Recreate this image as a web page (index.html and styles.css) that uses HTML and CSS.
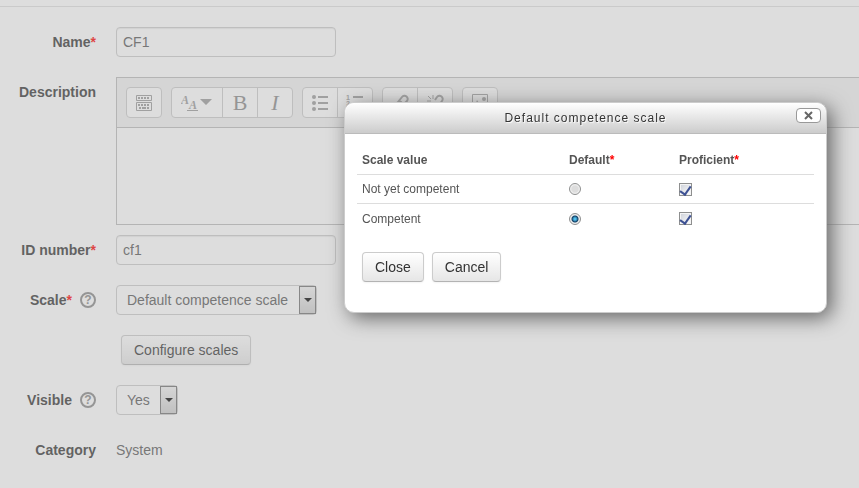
FILE: index.html
```html
<!DOCTYPE html>
<html lang="en">
<head>
    <meta charset="utf-8">
    <title>Competency framework</title>
    <link rel="stylesheet" href="styles.css">
</head>
<body>
    <form class="framework-form">
        <div class="form-row">
            <label class="form-label" for="name">Name<span class="req">*</span></label>
            <input class="text-input" type="text" id="name" value="CF1">
        </div>

        <div class="form-row editor-row">
            <label class="form-label" for="description">Description</label>
            <div class="editor">
                <div class="toolbar">
                    <div class="group">
                        <button type="button" aria-label="Show more buttons">
                            <svg width="16" height="16" viewBox="0 0 16 16" fill="none" stroke="#999">
                                <path d="M.5 .5h15v5h-15zM.5 7.5h15v8h-15z"/>
                                <path d="M2 3h12M2 10h12" stroke-width="2" stroke-dasharray="2 1"/>
                                <path d="M3 13h2M6 13h4M11 13h2" stroke-width="2"/>
                            </svg>
                        </button>
                    </div>
                    <div class="group">
                        <button type="button" class="wide" aria-label="Paragraph styles">
                            <svg width="32" height="20" viewBox="0 0 32 20" fill="#999">
                                <text class="serif-a" x="0" y="11">A</text>
                                <text class="serif-a" x="8" y="16">A</text>
                                <path d="M6 17h11v1H6zM19 6h12l-6 6z"/>
                            </svg>
                        </button>
                        <button type="button" class="bold">B</button>
                        <button type="button" class="italic">I</button>
                    </div>
                    <div class="group">
                        <button type="button" aria-label="Unordered list">
                            <svg width="18" height="18" viewBox="0 0 18 18" fill="#999">
                                <circle cx="3" cy="3" r="2"/>
                                <circle cx="3" cy="9" r="2"/>
                                <circle cx="3" cy="15" r="2"/>
                                <path d="M7 2h10v2H7zM7 8h10v2H7zM7 14h10v2H7z"/>
                            </svg>
                        </button>
                        <button type="button" aria-label="Ordered list">
                            <svg width="18" height="18" viewBox="0 0 18 18" fill="#999">
                                <text class="list-num" x="0" y="6">1</text>
                                <text class="list-num" x="0" y="12">2</text>
                                <text class="list-num" x="0" y="18">3</text>
                                <path d="M7 2h10v2H7zM7 8h10v2H7zM7 14h10v2H7z"/>
                            </svg>
                        </button>
                    </div>
                    <div class="group">
                        <button type="button" aria-label="Link">
                            <svg width="18" height="18" viewBox="0 0 18 18" fill="none" stroke="#999" stroke-width="2">
                                <path d="M7 8l4-5a3 3 0 0 1 5 4l-4 4a3 3 0 0 1-4 0M11 9a3 3 0 0 0-4-1l-4 4a3 3 0 0 0 4 4l2-2"/>
                            </svg>
                        </button>
                        <button type="button" aria-label="Unlink">
                            <svg width="18" height="18" viewBox="0 0 18 18" fill="none" stroke="#999" stroke-width="2">
                                <path d="M9 6l2-3a3 3 0 0 1 5 4l-3 4M5 9l-2 3a3 3 0 0 0 4 4l2-2"/>
                                <path d="M7 1v4M2 2l3 3M1 7h4" stroke-width="1"/>
                            </svg>
                        </button>
                    </div>
                    <div class="group">
                        <button type="button" aria-label="Image">
                            <svg width="18" height="18" viewBox="0 0 18 18" fill="#999">
                                <path d="M1.5 .5h15v15h-15z" fill="none" stroke="#999"/>
                                <circle cx="13" cy="5" r="2"/>
                                <path d="M3 14l3-8 4 6 2-2 3 4z"/>
                            </svg>
                        </button>
                    </div>
                </div>
                <textarea id="description"></textarea>
            </div>
        </div>

        <div class="form-row">
            <label class="form-label" for="idnumber">ID number<span class="req">*</span></label>
            <input class="text-input" type="text" id="idnumber" value="cf1">
        </div>

        <div class="form-row">
            <div class="form-label">
                <label for="scale">Scale<span class="req">*</span></label>
                <svg class="help" width="16" height="16" viewBox="0 0 16 16">
                    <circle cx="8" cy="8" r="7" fill="none" stroke="#888" stroke-width="2"/>
                    <text x="8" y="12" text-anchor="middle">?</text>
                </svg>
            </div>
            <div class="select-box">
                <select id="scale">
                    <option>Default competence scale</option>
                </select>
                <span class="arrow"></span>
            </div>
        </div>

        <div class="form-row">
            <span class="form-label"></span>
            <button type="button" class="btn configure">Configure scales</button>
        </div>

        <div class="form-row">
            <div class="form-label">
                <label for="visible">Visible</label>
                <svg class="help" width="16" height="16" viewBox="0 0 16 16">
                    <circle cx="8" cy="8" r="7" fill="none" stroke="#888" stroke-width="2"/>
                    <text x="8" y="12" text-anchor="middle">?</text>
                </svg>
            </div>
            <div class="select-box">
                <select id="visible">
                    <option>Yes</option>
                </select>
                <span class="arrow"></span>
            </div>
        </div>

        <div class="form-row">
            <span class="form-label">Category</span>
            <span>System</span>
        </div>
    </form>

    <div class="mask"></div>

    <div class="dialogue" role="dialog" aria-labelledby="dialogue-title">
        <div class="dialogue-header">
            <h1 id="dialogue-title">Default competence scale</h1>
            <button type="button" class="close-button" aria-label="Close dialogue">
                <svg width="9" height="9" viewBox="0 0 9 9" fill="none" stroke="#666" stroke-width="2">
                    <path d="M1 1l7 7M8 1l-7 7"/>
                </svg>
            </button>
        </div>
        <div class="dialogue-body">
            <table>
                <thead>
                    <tr>
                        <th class="col-value">Scale value</th>
                        <th class="col-default">Default<span class="req">*</span></th>
                        <th>Proficient<span class="req">*</span></th>
                    </tr>
                </thead>
                <tbody>
                    <tr>
                        <td>Not yet competent</td>
                        <td><input type="radio" name="default" aria-label="Not yet competent default"></td>
                        <td><input type="checkbox" aria-label="Not yet competent proficient" checked></td>
                    </tr>
                    <tr>
                        <td>Competent</td>
                        <td><input type="radio" name="default" aria-label="Competent default" checked></td>
                        <td><input type="checkbox" aria-label="Competent proficient" checked></td>
                    </tr>
                </tbody>
            </table>
            <div class="dialogue-buttons">
                <button type="button" class="btn">Close</button>
                <button type="button" class="btn">Cancel</button>
            </div>
        </div>
    </div>
</body>
</html>
```

FILE: styles.css
```css
* {
    box-sizing: border-box;
}

body {
    margin: 0;
    padding-top: 6px;
    font-family: "Liberation Sans", Arial, sans-serif;
    font-size: 14px;
    line-height: 20px;
    color: #555;
    background-color: #fff;
    overflow: hidden;
}

button,
input,
select,
textarea {
    font-family: inherit;
    font-size: 14px;
    line-height: 20px;
    color: #555;
    margin: 0;
}

.req {
    color: #f00;
}

/* Form */
.framework-form {
    display: flex;
    flex-direction: column;
    gap: 20px;
    padding-top: 20px;
    border-top: 1px solid #e0e0e0;
}

.form-row {
    display: flex;
    align-items: center;
    gap: 20px;
    min-height: 30px;
}

.form-label {
    flex: none;
    display: flex;
    justify-content: flex-end;
    align-items: center;
    width: 96px;
    font-weight: bold;
    color: #333;
}

.help {
    margin-left: 8px;
}

.help text {
    font-size: 12px;
    font-weight: bold;
    fill: #888;
}

.text-input {
    width: 220px;
    height: 30px;
    padding: 4px 6px;
    border: 1px solid #ccc;
    border-radius: 4px;
    background-color: #fff;
    box-shadow: inset 0 1px 1px rgba(0, 0, 0, 0.08);
}

.editor-row {
    align-items: flex-start;
    margin-bottom: -10px;
}

.editor-row > .form-label {
    padding-top: 5px;
}

.editor {
    flex: 1;
    border: 1px solid #bbb;
    border-right: none;
}

.toolbar {
    display: flex;
    gap: 9px;
    padding: 9px;
    background-color: #f2f2f2;
    border-bottom: 1px solid #bbb;
}

.group {
    display: flex;
    border: 1px solid #ccc;
    border-radius: 4px;
    background-color: #fff;
}

.group button {
    display: flex;
    align-items: center;
    justify-content: center;
    width: 34px;
    height: 29px;
    padding: 0;
    border: none;
    background: none;
    color: #888;
}

.group button + button {
    width: 35px;
    border-left: 1px solid #ccc;
}

.group button.wide {
    width: 50px;
}

.group .bold,
.group .italic {
    font-family: "Liberation Serif", serif;
    font-size: 22px;
}

.group .italic {
    font-style: italic;
}

.serif-a {
    font: italic bold 12px "Liberation Serif", serif;
}

.list-num {
    font: bold 7px "Liberation Sans", sans-serif;
}

.editor textarea {
    display: block;
    width: 100%;
    height: 96px;
    padding: 4px;
    border: none;
    resize: none;
}

.select-box {
    display: flex;
    height: 30px;
    border: 1px solid #ccc;
    border-radius: 4px;
    background-color: #fff;
}

.select-box select {
    appearance: none;
    padding: 4px 10px;
    border: none;
    background: none;
}

.arrow {
    display: flex;
    align-items: center;
    justify-content: center;
    width: 17px;
    border: 1px solid #707070;
    background: linear-gradient(#f2f2f2, #cfcfcf);
}

.arrow::after {
    content: "";
    border: 4px solid transparent;
    border-top-color: #000;
    border-bottom: none;
}

.btn {
    height: 30px;
    padding: 4px 12px;
    border: 1px solid #ccc;
    border-bottom-color: #b3b3b3;
    border-radius: 4px;
    color: #333;
    background: linear-gradient(#fff, #e6e6e6);
    box-shadow: 0 1px 2px rgba(0, 0, 0, 0.05);
}

.configure {
    margin-left: 5px;
}

/* Dialogue */
.mask {
    position: fixed;
    inset: 0;
    background-color: #aaa;
    opacity: 0.4;
}

.dialogue {
    position: absolute;
    top: 102px;
    left: 344px;
    right: 32px;
    border: 1px solid #ccc;
    border-radius: 10px;
    background-color: #fff;
    box-shadow: 5px 5px 20px 0 #666;
}

.dialogue-header {
    display: flex;
    align-items: center;
    position: relative;
    height: 31px;
    border-bottom: 1px solid #bbb;
    border-radius: 10px 10px 0 0;
    background: linear-gradient(#fff, #ccc);
}

.dialogue-header h1 {
    flex: 1;
    margin: 0;
    text-align: center;
    font-size: 12px;
    font-weight: normal;
    letter-spacing: 1px;
    color: #333;
    text-shadow: 1px 1px 1px #fff;
}

.close-button {
    position: absolute;
    top: 5px;
    right: 5px;
    display: flex;
    align-items: center;
    justify-content: center;
    width: 25px;
    height: 15px;
    padding: 0;
    border: 1px solid #999;
    border-radius: 4px;
    background-color: #fff;
}

.dialogue-body {
    padding: 12px 12px 30px;
}

table {
    width: 100%;
    border-collapse: separate;
    border-spacing: 0;
    table-layout: fixed;
    font-size: 12px;
}

th,
td {
    height: 29px;
    padding: 4px 5px;
    text-align: left;
    line-height: 20px;
    border-bottom: 1px solid #ddd;
}

tbody tr:last-child td {
    border-bottom: none;
}

.col-value {
    width: 207px;
}

.col-default {
    width: 110px;
}

td input {
    appearance: none;
    display: block;
    width: 13px;
    height: 13px;
    border: 1px solid #8e8f8f;
}

td input[type="radio"] {
    width: 12px;
    height: 12px;
    border-radius: 50%;
    background: radial-gradient(circle, #ddd 3px, #f6f6f6 5px);
}

td input[type="radio"]:checked {
    background: radial-gradient(circle, #4fc0ee 1px, #123f66 3px, #eee 4px);
}

td input[type="checkbox"] {
    display: flex;
    justify-content: center;
    background: linear-gradient(135deg, #ccd0d8, #fff);
    box-shadow: inset 0 0 0 1px #f4f4f4;
}

td input[type="checkbox"]:checked::after {
    content: "";
    width: 5px;
    height: 9px;
    border: solid #3d5193;
    border-width: 0 2px 2px 0;
    transform: rotate(35deg);
}

.dialogue-buttons {
    display: flex;
    gap: 8px;
    padding: 19px 5px 0;
}
```
